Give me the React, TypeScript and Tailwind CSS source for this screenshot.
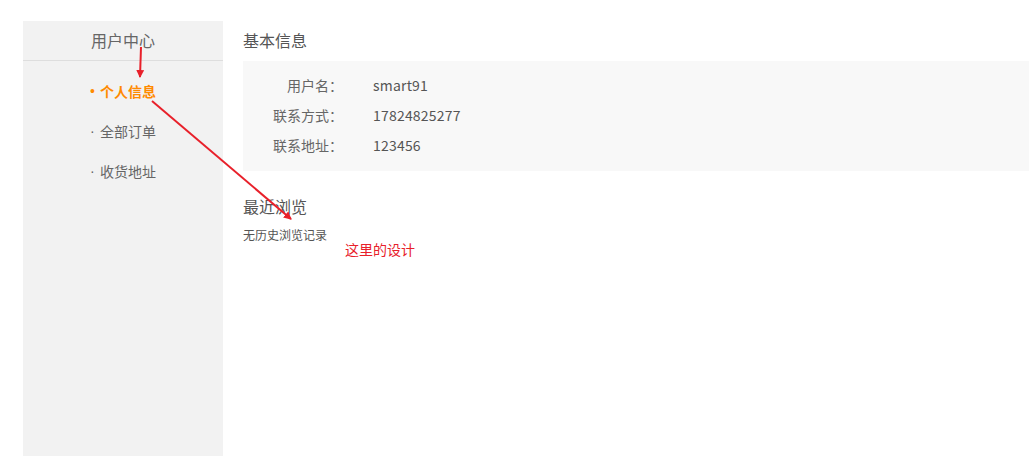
import React from "react";

const menu = [
  { label: "个人信息", active: true },
  { label: "全部订单", active: false },
  { label: "收货地址", active: false },
];

const info = [
  { label: "用户名：", value: "smart91" },
  { label: "联系方式：", value: "17824825277" },
  { label: "联系地址：", value: "123456" },
];

const App = () => {
  return (
    <div
      className="relative h-screen overflow-hidden bg-white pl-[23px] pt-[21px] text-[#666]"
      style={{ fontFamily: '"Microsoft YaHei", "Noto Sans CJK SC", sans-serif' }}
    >
      <div className="flex h-full">
        {/* Sidebar */}
        <aside className="w-[200px] shrink-0 bg-[#f2f2f2]">
          <h3 className="h-10 border-b border-[#dedede] text-center text-[16px] leading-[39px] text-[#666]">
            用户中心
          </h3>
          <ul className="pl-[67px] pt-[10px]">
            {menu.map((item) => (
              <li
                key={item.label}
                className={
                  item.active
                    ? "flex h-10 items-center text-[14px] font-bold text-[#ff8a00]"
                    : "flex h-10 items-center text-[14px] text-[#666]"
                }
              >
                <span className="w-[10px] font-['Liberation_Sans',sans-serif] font-normal">
                  {item.active ? "•" : "·"}
                </span>
                <span>{item.label}</span>
              </li>
            ))}
          </ul>
        </aside>

        {/* Main */}
        <main className="ml-5 flex-1">
          <h3 className="h-10 text-[16px] leading-[38px] text-[#555]">基本信息</h3>
          <div className="bg-[#f8f8f8] pb-[11px] pt-[9px]">
            {info.map((row) => (
              <div key={row.label} className="flex h-[30px] items-center text-[14px]">
                <span className="w-[100px] text-right text-[#666]">{row.label}</span>
                <span className="ml-[30px] tracking-[0.2px] text-[#555]">{row.value}</span>
              </div>
            ))}
          </div>
          <h3 className="mt-4 h-10 text-[16px] leading-[38px] text-[#555]">最近浏览</h3>
          <p className="text-[12px] leading-4 text-[#555]">无历史浏览记录</p>
        </main>
      </div>

      {/* Annotations */}
      <svg className="pointer-events-none absolute left-0 top-0" width="1029" height="456">
        <defs>
          <marker id="ah" markerWidth="8" markerHeight="8" refX="7" refY="4" orient="auto" markerUnits="userSpaceOnUse">
            <path d="M0,0 L8,4 L0,8 Z" fill="#e8202a" />
          </marker>
        </defs>
        <line x1="141" y1="47" x2="140" y2="77" stroke="#e8202a" strokeWidth="2" markerEnd="url(#ah)" />
        <line x1="152" y1="101" x2="291" y2="219" stroke="#e8202a" strokeWidth="2" markerEnd="url(#ah)" />
      </svg>
      <span className="absolute left-[345px] top-[240px] text-[14px] leading-[18px] text-[#e8202a]">这里的设计</span>
    </div>
  );
};

export default App;
